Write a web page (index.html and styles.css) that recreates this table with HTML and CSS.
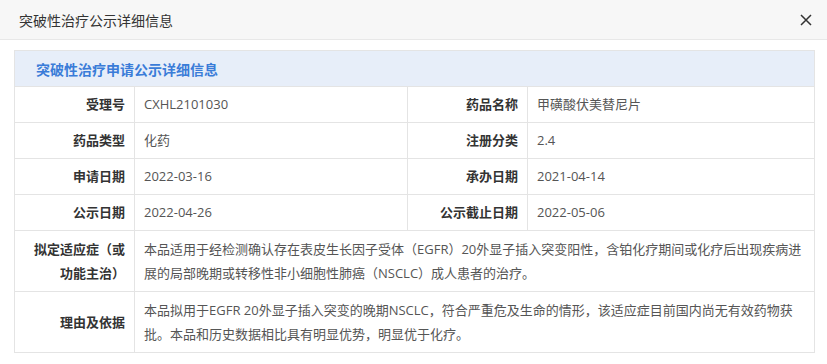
FILE: index.html
```html
<!DOCTYPE html>
<html lang="zh-CN">
<head>
<meta charset="utf-8">
<title>突破性治疗公示详细信息</title>
<link rel="stylesheet" href="styles.css">
</head>
<body>
<div class="dialog">
  <div class="dialog-header">
    <span class="dialog-title">突破性治疗公示详细信息</span>
    <button class="close-btn" aria-label="关闭">
      <svg width="12" height="12" viewBox="0 0 12 12"><path d="M1 1L11 11M11 1L1 11" stroke="#333" stroke-width="1.5" fill="none"/></svg>
    </button>
  </div>
  <div class="dialog-body">
    <table class="info-table">
      <colgroup>
        <col class="c-label"><col class="c-value1"><col class="c-label"><col class="c-value2">
      </colgroup>
      <thead>
        <tr><th colspan="4" class="table-title">突破性治疗申请公示详细信息</th></tr>
      </thead>
      <tbody>
        <tr>
          <td class="label">受理号</td><td class="value">CXHL2101030</td>
          <td class="label">药品名称</td><td class="value">甲磺酸伏美替尼片</td>
        </tr>
        <tr>
          <td class="label">药品类型</td><td class="value">化药</td>
          <td class="label">注册分类</td><td class="value">2.4</td>
        </tr>
        <tr>
          <td class="label">申请日期</td><td class="value">2022-03-16</td>
          <td class="label">承办日期</td><td class="value">2021-04-14</td>
        </tr>
        <tr>
          <td class="label">公示日期</td><td class="value">2022-04-26</td>
          <td class="label">公示截止日期</td><td class="value">2022-05-06</td>
        </tr>
        <tr class="long">
          <td class="label">拟定适应症（或功能主治）</td>
          <td class="value" colspan="3">本品适用于经检测确认存在表皮生长因子受体（EGFR）20外显子插入突变阳性，含铂化疗期间或化疗后出现疾病进展的局部晚期或转移性非小细胞性肺癌（NSCLC）成人患者的治疗。</td>
        </tr>
        <tr class="long">
          <td class="label">理由及依据</td>
          <td class="value" colspan="3">本品拟用于EGFR 20外显子插入突变的晚期NSCLC，符合严重危及生命的情形，该适应症目前国内尚无有效药物获批。本品和历史数据相比具有明显优势，明显优于化疗。</td>
        </tr>
      </tbody>
    </table>
  </div>
</div>
</body>
</html>
```

FILE: styles.css
```css
html, body {
  margin: 0;
  padding: 0;
  background: #fff;
}
body {
  font-family: "Open Sans", "Noto Sans CJK SC", sans-serif;
  color: #333;
}
.dialog {
  width: 827px;
}
.dialog-header {
  height: 40px;
  background: #f7f7f7;
  border-bottom: 1px solid #e8e8e8;
  display: flex;
  align-items: center;
  justify-content: space-between;
  padding: 0 15px 0 19px;
  box-sizing: border-box;
}
.dialog-title {
  font-size: 14px;
  color: #333;
}
.close-btn {
  border: 0;
  background: none;
  padding: 0;
  width: 12px;
  height: 12px;
  display: flex;
  cursor: pointer;
}
.dialog-body {
  padding: 10px 14px;
}
.info-table {
  width: 800px;
  border-collapse: collapse;
  table-layout: fixed;
  font-size: 13px;
}
.c-label { width: 120px; }
.c-value1 { width: 273px; }
.c-value2 { width: 287px; }
.info-table th,
.info-table td {
  border: 1px solid #e4e4e4;
}
.table-title {
  background: #e7eef9;
  color: #3a7cd8;
  font-weight: bold;
  font-size: 14px;
  text-align: left;
  height: 36px;
  padding: 0 0 0 21px;
  box-sizing: border-box;
}
.info-table td {
  padding: 6px 9px;
  line-height: 23px;
  height: 35px;
  box-sizing: border-box;
}
.info-table td.label {
  text-align: right;
  font-weight: bold;
  color: #333;
}
.info-table td.value {
  color: #555;
}
.info-table tr.long td {
  padding: 6px 9px;
  line-height: 24px;
}
```
